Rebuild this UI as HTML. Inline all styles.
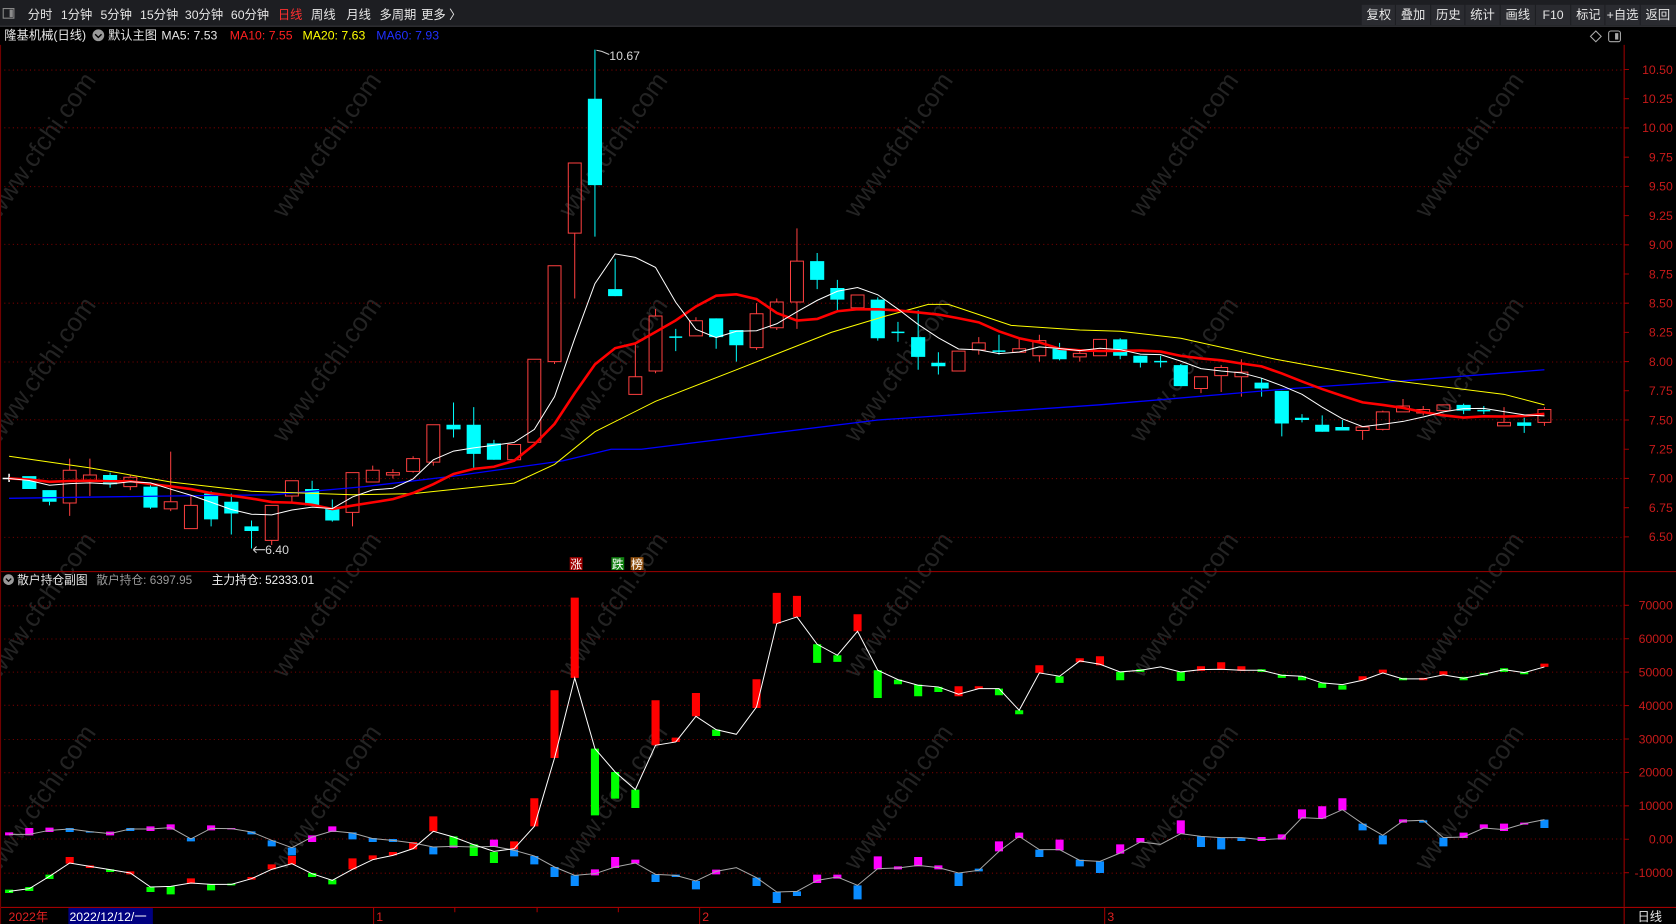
<!DOCTYPE html>
<html><head><meta charset="utf-8">
<style>
html,body{margin:0;padding:0;background:#000;overflow:hidden}
svg{display:block}
text{font-family:"Liberation Sans","Noto Sans CJK SC",sans-serif}
.n{vector-effect:non-scaling-stroke}
</style></head>
<body>
<svg width="1676" height="924" viewBox="0 0 1568 864" preserveAspectRatio="none" xmlns="http://www.w3.org/2000/svg">
<rect x="0" y="0" width="1568" height="864" fill="#000"/>
<g fill="#232323" font-size="24" text-anchor="middle">
<text x="45" y="140" transform="rotate(-55 45 140)">www.cfchi.com</text>
<text x="312" y="140" transform="rotate(-55 312 140)">www.cfchi.com</text>
<text x="580" y="140" transform="rotate(-55 580 140)">www.cfchi.com</text>
<text x="847" y="140" transform="rotate(-55 847 140)">www.cfchi.com</text>
<text x="1114" y="140" transform="rotate(-55 1114 140)">www.cfchi.com</text>
<text x="1381" y="140" transform="rotate(-55 1381 140)">www.cfchi.com</text>
<text x="45" y="350" transform="rotate(-55 45 350)">www.cfchi.com</text>
<text x="312" y="350" transform="rotate(-55 312 350)">www.cfchi.com</text>
<text x="580" y="350" transform="rotate(-55 580 350)">www.cfchi.com</text>
<text x="847" y="350" transform="rotate(-55 847 350)">www.cfchi.com</text>
<text x="1114" y="350" transform="rotate(-55 1114 350)">www.cfchi.com</text>
<text x="1381" y="350" transform="rotate(-55 1381 350)">www.cfchi.com</text>
<text x="45" y="570" transform="rotate(-55 45 570)">www.cfchi.com</text>
<text x="312" y="570" transform="rotate(-55 312 570)">www.cfchi.com</text>
<text x="580" y="570" transform="rotate(-55 580 570)">www.cfchi.com</text>
<text x="847" y="570" transform="rotate(-55 847 570)">www.cfchi.com</text>
<text x="1114" y="570" transform="rotate(-55 1114 570)">www.cfchi.com</text>
<text x="1381" y="570" transform="rotate(-55 1381 570)">www.cfchi.com</text>
<text x="45" y="750" transform="rotate(-55 45 750)">www.cfchi.com</text>
<text x="312" y="750" transform="rotate(-55 312 750)">www.cfchi.com</text>
<text x="580" y="750" transform="rotate(-55 580 750)">www.cfchi.com</text>
<text x="847" y="750" transform="rotate(-55 847 750)">www.cfchi.com</text>
<text x="1114" y="750" transform="rotate(-55 1114 750)">www.cfchi.com</text>
<text x="1381" y="750" transform="rotate(-55 1381 750)">www.cfchi.com</text>
</g>
<!-- grids -->
<g stroke="#7a0000" stroke-dasharray="1 3">
<line x1="0" y1="65.5" x2="1519" y2="65.5"/><line x1="0" y1="119.5" x2="1519" y2="119.5"/><line x1="0" y1="174.5" x2="1519" y2="174.5"/><line x1="0" y1="228.5" x2="1519" y2="228.5"/><line x1="0" y1="283.5" x2="1519" y2="283.5"/><line x1="0" y1="338.5" x2="1519" y2="338.5"/><line x1="0" y1="392.5" x2="1519" y2="392.5"/><line x1="0" y1="447.5" x2="1519" y2="447.5"/><line x1="0" y1="502.5" x2="1519" y2="502.5"/>
<line x1="0" y1="566.5" x2="1519" y2="566.5"/><line x1="0" y1="597.5" x2="1519" y2="597.5"/><line x1="0" y1="628.5" x2="1519" y2="628.5"/><line x1="0" y1="659.5" x2="1519" y2="659.5"/><line x1="0" y1="691.5" x2="1519" y2="691.5"/><line x1="0" y1="722.5" x2="1519" y2="722.5"/><line x1="0" y1="753.5" x2="1519" y2="753.5"/><line x1="0" y1="784.5" x2="1519" y2="784.5"/><line x1="0" y1="816.5" x2="1519" y2="816.5"/>
</g>
<!-- main chart in data coords: x=i, y=price -->
<g transform="matrix(18.9 0 0 -109.25 8.5 1212.125)" fill="none">
<path class="n" stroke="#00ffff" stroke-width="1" d="M2 6.8V6.77M5 7.05V6.92M7 6.95V6.74M10 6.89V6.59M11 6.87V6.52M12 6.64V6.4M15 6.98V6.77M16 6.82V6.63M22 7.65V7.35M23 7.61V7.09M24 7.33V7.16M29 10.67V9.07M30 8.88V8.56M35 8.37V8.11M36 8.27V8M40 8.93V8.62M41 8.7V8.44M43 8.55V8.18M45 8.44V7.93M46 8.08V7.89M52 8.16V8.01M55 8.2V8.02M56 8.05V7.95M58 7.98V7.79M62 7.86V7.7M63 7.75V7.36M64 7.55V7.48M65 7.54V7.4M66 7.5V7.41M72 7.64V7.55M75 7.52V7.39M33 8.28V8.09M44 8.34V8.17M49 8.23V8.06M57 8.05V7.95M73 7.62V7.55"/>
<path class="n" stroke="#00ffff" stroke-width="1.5" d="M32.68 8.21H33.32M43.68 8.25H44.32M48.68 8.09H49.32M56.68 8H57.32M72.68 7.58H73.32"/>
<path class="n" stroke="#fff" stroke-width="1.5" d="M-0.32 7H0.32M0 7.04V6.97"/>
<path fill="#00ffff" d="M.65 7.02h.7V6.91h-.7zM1.65 6.9h.7V6.8h-.7zM4.65 7.03h.7V6.95h-.7zM6.65 6.93h.7V6.75h-.7zM9.65 6.87h.7V6.65h-.7zM10.65 6.8h.7V6.7h-.7zM11.65 6.59h.7V6.55h-.7zM14.65 6.91h.7V6.77h-.7zM15.65 6.74h.7V6.64h-.7zM21.65 7.46h.7V7.42h-.7zM22.65 7.46h.7V7.21h-.7zM23.65 7.3h.7V7.16h-.7zM28.65 10.25h.7V9.51h-.7zM29.65 8.62h.7V8.56h-.7zM34.65 8.37h.7V8.21h-.7zM35.65 8.27h.7V8.14h-.7zM39.65 8.86h.7V8.7h-.7zM40.65 8.63h.7V8.53h-.7zM42.65 8.53h.7V8.2h-.7zM44.65 8.21h.7V8.04h-.7zM45.65 7.99h.7V7.96h-.7zM51.65 8.11h.7V8.02h-.7zM54.65 8.19h.7V8.05h-.7zM55.65 8.05h.7V7.99h-.7zM57.65 7.97h.7V7.79h-.7zM61.65 7.82h.7V7.77h-.7zM62.65 7.75h.7V7.47h-.7zM63.65 7.52h.7V7.5h-.7zM64.65 7.46h.7V7.4h-.7zM65.65 7.44h.7V7.41h-.7zM71.65 7.63h.7V7.58h-.7zM74.65 7.48h.7V7.45h-.7z"/>
<path class="n" stroke="#ff4040" stroke-width="1" d="M3 7.17V7.07M3 6.79V6.68M4 7.17V7.03M4 6.98V6.85M6 7.03V7.01M6 6.93V6.9M8 7.23V6.8M8 6.74V6.72M9 6.85V6.77M13 6.47V6.43M14 6.85V6.79M17 6.71V6.59M18 7.11V7.07M19 7.08V7.05M19 7.03V7M20 7.19V7.17M20 7.06V7.05M21 7.14V7.11M27 8V7.98M28 9.1V8.54M31 8.16V7.87M32 8.45V8.39M32 7.92V7.9M34 8.38V8.35M37 8.5V8.41M37 8.12V8.1M38 8.54V8.51M38 8.29V8.27M39 9.14V8.86M39 8.51V8.28M48 8.21V8.16M48 8.1V8.06M50 8.2V8.11M51 8.23V8.18M51 8.05V8M53 8.09V8.07M53 8.04V8M59 7.77V7.73M60 7.97V7.95M60 7.88V7.74M61 8.02V7.91M61 7.87V7.7M67 7.41V7.33M68 7.58V7.57M68 7.42V7.41M69 7.68V7.62M70 7.62V7.59M70 7.56V7.54M74 7.61V7.48M76 7.61V7.59M76 7.48V7.45"/>
<path class="n" stroke="#ff4040" stroke-width="1" d="M2.68 6.79h.64V7.07h-.64zM3.68 6.98h.64V7.03h-.64zM5.68 6.93h.64V7.01h-.64zM7.68 6.74h.64V6.8h-.64zM8.68 6.57h.64V6.77h-.64zM12.68 6.47h.64V6.77h-.64zM13.68 6.85h.64V6.98h-.64zM16.68 6.71h.64V7.05h-.64zM17.68 6.97h.64V7.07h-.64zM18.68 7.03h.64V7.05h-.64zM19.68 7.06h.64V7.17h-.64zM20.68 7.14h.64V7.46h-.64zM24.68 7.16h.64V7.29h-.64zM25.68 7.31h.64V8.02h-.64zM26.68 8h.64V8.82h-.64zM27.68 9.1h.64V9.7h-.64zM30.68 7.72h.64V7.87h-.64zM31.68 7.92h.64V8.39h-.64zM33.68 8.22h.64V8.35h-.64zM36.68 8.12h.64V8.41h-.64zM37.68 8.29h.64V8.51h-.64zM38.68 8.51h.64V8.86h-.64zM41.68 8.46h.64V8.57h-.64zM46.68 7.92h.64V8.09h-.64zM47.68 8.1h.64V8.16h-.64zM49.68 8.08h.64V8.11h-.64zM50.68 8.05h.64V8.18h-.64zM52.68 8.04h.64V8.07h-.64zM53.68 8.05h.64V8.19h-.64zM58.68 7.77h.64V7.87h-.64zM59.68 7.88h.64V7.95h-.64zM60.68 7.87h.64V7.91h-.64zM66.68 7.41h.64V7.44h-.64zM67.68 7.42h.64V7.57h-.64zM68.68 7.57h.64V7.62h-.64zM69.68 7.56h.64V7.59h-.64zM70.68 7.58h.64V7.63h-.64zM73.68 7.45h.64V7.48h-.64zM75.68 7.48h.64V7.59h-.64z"/>
<polyline class="n" stroke="#0000ff" stroke-width="1.3" points="0,6.83 8,6.85 13,6.86 17.6,6.93 22,7.02 27.4,7.15 29.8,7.25 31.3,7.25 43,7.5 54,7.63 63.5,7.77 68.6,7.83 76,7.93"/>
<polyline class="n" stroke="#ffff00" stroke-width="1" points="0,7.19 4,7.09 8,6.97 12,6.89 17,6.86 20,6.87 25,6.96 27,7.12 29,7.4 32,7.66 36,7.93 40.7,8.25 43.4,8.39 45.5,8.49 46.5,8.49 49.6,8.31 53,8.27 55,8.26 58,8.2 62.7,8.02 68.4,7.84 74,7.72 76,7.63"/>
<polyline class="n" stroke="#ff0000" stroke-width="2.6" points="0,7 1,6.991 2,6.971 3,6.978 4,6.981 5,6.976 6,6.977 7,6.952 8,6.932 9,6.909 10,6.874 11,6.853 12,6.828 13,6.798 14,6.793 15,6.775 16,6.738 17,6.768 18,6.795 19,6.823 20,6.875 21,6.951 22,7.038 23,7.082 24,7.1 25,7.152 26,7.29 27,7.467 28,7.73 29,7.976 30,8.115 31,8.156 32,8.253 33,8.353 34,8.472 35,8.564 36,8.576 37,8.535 38,8.416 39,8.351 40,8.365 41,8.431 42,8.449 43,8.448 44,8.438 45,8.421 46,8.403 47,8.371 48,8.336 49,8.259 50,8.2 51,8.165 52,8.11 53,8.097 54,8.091 55,8.092 56,8.095 57,8.086 58,8.049 59,8.027 60,8.011 61,7.984 62,7.959 63,7.899 64,7.83 65,7.765 66,7.707 67,7.651 68,7.629 69,7.604 70,7.568 71,7.54 72,7.521 73,7.532 74,7.53 75,7.535 76,7.553"/>
<polyline class="n" stroke="#ffffff" stroke-width="1" points="0,7 1,6.982 2,6.942 3,6.956 4,6.962 5,6.952 6,6.972 7,6.962 8,6.908 9,6.856 10,6.796 11,6.734 12,6.694 13,6.688 14,6.73 15,6.754 16,6.742 17,6.842 18,6.902 19,6.916 20,6.996 21,7.16 22,7.234 23,7.262 24,7.284 25,7.308 26,7.42 27,7.7 28,8.198 29,8.668 30,8.922 31,8.892 32,8.806 33,8.508 34,8.276 35,8.206 36,8.26 37,8.264 38,8.324 39,8.426 40,8.524 41,8.602 42,8.634 43,8.572 44,8.45 45,8.318 46,8.204 47,8.108 48,8.1 49,8.068 50,8.082 51,8.126 52,8.112 53,8.094 54,8.114 55,8.102 56,8.064 57,8.06 58,8.004 59,7.94 60,7.92 61,7.904 62,7.858 63,7.794 64,7.72 65,7.61 66,7.51 67,7.444 68,7.464 69,7.488 70,7.526 71,7.57 72,7.598 73,7.6 74,7.572 75,7.544 76,7.536"/>
</g>
<path d="M558 47 L563 48 L570 51" fill="none" stroke="#ccc"/>
<text x="570" y="56" fill="#d8d8d8" font-size="11.5">10.67</text>
<path d="M237 514 L248 514 M237 514 L240 511 M237 514 L240 517" fill="none" stroke="#ccc"/>
<text x="248" y="518" fill="#d8d8d8" font-size="11.5">6.40</text>
<!-- sub chart -->
<g transform="matrix(18.9 0 0 0.3118 8.5 533.2)">
<path fill="#00ff00" d="M-.2 958h.4V968h-.4zM.8 950h.4V962h-.4zM1.8 913h.4V926h-.4zM4.8 897h.4V905h-.4zM6.8 950h.4V965h-.4zM7.8 947h.4V972h-.4zM9.8 942h.4V960h-.4zM10.8 940h.4V945h-.4zM14.8 908h.4V920h-.4zM15.8 928h.4V942h-.4zM21.8 798h.4V828h-.4zM22.8 822h.4V857h-.4zM23.8 845h.4V878h-.4zM28.8 535h.4V735h-.4zM29.8 605h.4V685h-.4zM30.8 658h.4V713h-.4zM34.8 478h.4V497h-.4zM39.8 222h.4V278h-.4zM40.8 255h.4V275h-.4zM42.8 300h.4V383h-.4zM43.8 328h.4V342h-.4zM44.8 343h.4V378h-.4zM45.8 350h.4V365h-.4zM48.8 355h.4V375h-.4zM49.8 420h.4V432h-.4zM51.8 318h.4V338h-.4zM54.8 305h.4V330h-.4zM55.8 297h.4V305h-.4zM57.8 305h.4V332h-.4zM61.8 297h.4V305h-.4zM62.8 313h.4V323h-.4zM63.8 318h.4V330h-.4zM64.8 338h.4V353h-.4zM65.8 345h.4V358h-.4zM68.8 323h.4V330h-.4zM71.8 320h.4V330h-.4zM72.8 308h.4V315h-.4zM73.8 294h.4V305h-.4zM74.8 305h.4V312h-.4z"/>
<path fill="#ff0000" d="M2.8 860h.4V880h-.4zM3.8 885h.4V893h-.4zM5.8 903h.4V912h-.4zM8.8 924h.4V940h-.4zM11.8 920h.4V928h-.4zM12.8 882h.4V897h-.4zM13.8 857h.4V882h-.4zM16.8 864h.4V897h-.4zM17.8 855h.4V868h-.4zM18.8 845h.4V855h-.4zM19.8 815h.4V837h-.4zM20.8 738h.4V783h-.4zM24.8 813h.4V837h-.4zM25.8 684h.4V768h-.4zM26.8 360h.4V563h-.4zM27.8 82h.4V323h-.4zM31.8 390h.4V525h-.4zM32.8 502h.4V515h-.4zM33.8 368h.4V438h-.4zM36.8 327h.4V413h-.4zM37.8 68h.4V160h-.4zM38.8 77h.4V140h-.4zM41.8 132h.4V183h-.4zM46.8 348h.4V378h-.4zM47.8 348h.4V356h-.4zM50.8 285h.4V308h-.4zM52.8 264h.4V276h-.4zM53.8 258h.4V285h-.4zM58.8 288h.4V302h-.4zM59.8 276h.4V297h-.4zM60.8 288h.4V302h-.4zM66.8 318h.4V330h-.4zM67.8 298h.4V308h-.4zM69.8 323h.4V330h-.4zM70.8 303h.4V314h-.4zM75.8 280h.4V290h-.4z"/>
<path fill="#ff00ff" d="M-.2 786h.4V795h-.4zM.8 773h.4V795h-.4zM1.8 772h.4V785h-.4zM4.8 784h.4V795h-.4zM6.8 768h.4V782h-.4zM7.8 762h.4V778h-.4zM9.8 765h.4V780h-.4zM10.8 773h.4V777h-.4zM14.8 795h.4V815h-.4zM15.8 768h.4V785h-.4zM21.8 826h.4V832h-.4zM23.8 808h.4V830h-.4zM28.8 897h.4V915h-.4zM29.8 860h.4V893h-.4zM30.8 868h.4V880h-.4zM34.8 898h.4V912h-.4zM39.8 913h.4V938h-.4zM40.8 913h.4V925h-.4zM42.8 858h.4V897h-.4zM43.8 888h.4V897h-.4zM44.8 860h.4V888h-.4zM45.8 885h.4V897h-.4zM48.8 813h.4V843h-.4zM49.8 787h.4V803h-.4zM51.8 808h.4V840h-.4zM54.8 822h.4V850h-.4zM55.8 803h.4V817h-.4zM57.8 750h.4V790h-.4zM61.8 800h.4V812h-.4zM62.8 792h.4V808h-.4zM63.8 717h.4V745h-.4zM64.8 708h.4V745h-.4zM65.8 684h.4V720h-.4zM68.8 747h.4V757h-.4zM71.8 787h.4V803h-.4zM72.8 762h.4V775h-.4zM73.8 760h.4V782h-.4zM74.8 757h.4V763h-.4z"/>
<path fill="#0a8cff" d="M2.8 773h.4V785h-.4zM3.8 783h.4V787h-.4zM5.8 773h.4V782h-.4zM8.8 803h.4V813h-.4zM11.8 783h.4V792h-.4zM12.8 810h.4V828h-.4zM13.8 832h.4V855h-.4zM16.8 786h.4V807h-.4zM17.8 803h.4V815h-.4zM18.8 806h.4V815h-.4zM20.8 830h.4V852h-.4zM24.8 838h.4V858h-.4zM25.8 857h.4V882h-.4zM26.8 890h.4V920h-.4zM27.8 915h.4V947h-.4zM31.8 912h.4V935h-.4zM32.8 913h.4V920h-.4zM33.8 932h.4V957h-.4zM36.8 922h.4V947h-.4zM37.8 965h.4V998h-.4zM38.8 963h.4V977h-.4zM41.8 945h.4V987h-.4zM46.8 908h.4V947h-.4zM47.8 895h.4V903h-.4zM50.8 838h.4V860h-.4zM52.8 868h.4V888h-.4zM53.8 873h.4V908h-.4zM58.8 798h.4V830h-.4zM59.8 802h.4V837h-.4zM60.8 802h.4V812h-.4zM66.8 760h.4V780h-.4zM67.8 795h.4V822h-.4zM69.8 750h.4V757h-.4zM70.8 802h.4V828h-.4zM75.8 748h.4V773h-.4z"/>
<polyline class="n" fill="none" stroke="#a8a8a8" stroke-width="1" points="0,792 1,792 2,780 3,776 4,784 5,790 6,776 7,776 8,772 9,806 10,774 11,775 12,785 13,810 14,832 15,800 16,782 17,788 18,805 19,810 20,818 21,830 22,828 23,830 24,828 25,840 26,857 27,890 28,915 29,910 30,890 31,878 32,912 33,915 34,932 35,903 36,892 37,922 38,965 39,963 40,930 41,920 42,945 43,895 44,893 45,885 46,892 47,908 48,900 49,843 50,798 51,838 52,838 53,870 54,873 55,848 56,815 57,822 58,790 59,798 60,802 61,802 62,808 63,805 64,742 65,745 66,718 67,760 68,795 69,752 70,750 71,802 72,800 73,773 74,778 75,760 76,748"/>
<polyline class="n" fill="none" stroke="#ffffff" stroke-width="1" points="0,963 1,955 2,918 3,878 4,888 5,898 6,908 7,950 8,948 9,938 10,942 11,942 12,925 13,897 14,880 15,910 16,930 17,897 18,868 19,855 20,835 21,783 22,800 23,823 24,843 25,835 26,768 27,563 28,323 29,535 30,605 31,658 32,525 33,515 34,438 35,478 36,492 37,410 38,160 39,140 40,222 41,255 42,183 43,300 44,328 45,345 46,350 47,372 48,355 49,355 50,420 51,308 52,318 53,272 54,282 55,305 56,300 57,290 58,305 59,298 60,297 61,300 62,300 63,315 64,318 65,338 66,343 67,330 68,308 69,326 70,326 71,314 72,324 73,312 74,298 75,307 76,290"/>
</g>
<!-- top bar -->
<rect x="0" y="0" width="1568" height="24" fill="#1d1e22"/>
<line x1="0" y1="24.5" x2="1568" y2="24.5" stroke="#3a3b40"/>
<rect x="3" y="8" width="10" height="9" fill="none" stroke="#8a8a8a"/>
<rect x="9" y="9" width="3" height="7" fill="#8a8a8a"/>
<g font-size="11.5" fill="#e6e6e6">
<text x="26" y="18">分时</text><text x="57" y="18">1分钟</text><text x="94" y="18">5分钟</text>
<text x="131" y="18">15分钟</text><text x="173" y="18">30分钟</text><text x="216" y="18">60分钟</text>
<text x="260" y="18" fill="#ff3030">日线</text><text x="291" y="18">周线</text><text x="324" y="18">月线</text>
<text x="355" y="18">多周期</text><text x="394" y="18">更多 〉</text>
</g>
<g font-size="11.5" fill="#e6e6e6" text-anchor="middle">
<rect x="1274" y="4.5" width="31" height="19" fill="#2a2b30"/><text x="1290" y="18">复权</text>
<rect x="1306" y="4.5" width="32" height="19" fill="#2a2b30"/><text x="1322" y="18">叠加</text>
<rect x="1339" y="4.5" width="31" height="19" fill="#2a2b30"/><text x="1355" y="18">历史</text>
<rect x="1371" y="4.5" width="32" height="19" fill="#2a2b30"/><text x="1387" y="18">统计</text>
<rect x="1404" y="4.5" width="32" height="19" fill="#2a2b30"/><text x="1420" y="18">画线</text>
<rect x="1437" y="4.5" width="32" height="19" fill="#2a2b30"/><text x="1453" y="18">F10</text>
<rect x="1470" y="4.5" width="31" height="19" fill="#2a2b30"/><text x="1486" y="18">标记</text>
<rect x="1502" y="4.5" width="32" height="19" fill="#2a2b30"/><text x="1518" y="18">+自选</text>
<rect x="1535" y="4.5" width="33" height="19" fill="#2a2b30"/><text x="1551" y="18">返回</text>
</g>
<!-- info row -->
<g font-size="11.5">
<text x="4" y="37" fill="#e6e6e6">隆基机械(日线)</text>
<circle cx="92" cy="33" r="5.5" fill="#9a9a9a"/><path d="M89 32 L92 35 L95 32" stroke="#000" stroke-width="1.3" fill="none"/>
<text x="101" y="37" fill="#e6e6e6">默认主图</text>
<text x="151" y="37" fill="#e6e6e6">MA5: 7.53</text>
<text x="215" y="37" fill="#ff2020">MA10: 7.55</text>
<text x="283" y="37" fill="#ffff00">MA20: 7.63</text>
<text x="352" y="37" fill="#2030ff">MA60: 7.93</text>
</g>
<path d="M1493 29 L1498 34 L1493 39 L1488 34 Z" fill="none" stroke="#aaa"/>
<rect x="1505" y="29" width="11" height="10" rx="2" fill="none" stroke="#aaa"/><rect x="1511" y="31" width="3" height="6" fill="#aaa"/>
<!-- axes -->
<line x1="1519.5" y1="42" x2="1519.5" y2="848" stroke="#9a0000"/>
<line x1="0" y1="534.5" x2="1568" y2="534.5" stroke="#a00000"/>
<line x1="0" y1="848.5" x2="1568" y2="848.5" stroke="#a00000"/>
<line x1="0.5" y1="42" x2="0.5" y2="864" stroke="#700000"/>
<g stroke="#9a0000">
<path d="M1519 65h5M1519 92.3h5M1519 119.6h5M1519 147h5M1519 174.25h5M1519 201.6h5M1519 228.9h5M1519 256.2h5M1519 283.5h5M1519 310.8h5M1519 338.1h5M1519 365.4h5M1519 392.75h5M1519 420.1h5M1519 447.4h5M1519 474.7h5M1519 502h5M1519 566h5M1519 597.25h5M1519 628.5h5M1519 659.75h5M1519 691h5M1519 722.25h5M1519 753.5h5M1519 784.75h5M1519 816h5"/>
</g>
<g font-size="11.5" fill="#c81a1a" text-anchor="end">
<text x="1565" y="69">10.50</text><text x="1565" y="96.3">10.25</text><text x="1565" y="123.6">10.00</text><text x="1565" y="151">9.75</text><text x="1565" y="178.25">9.50</text><text x="1565" y="205.6">9.25</text><text x="1565" y="232.9">9.00</text><text x="1565" y="260.2">8.75</text><text x="1565" y="287.5">8.50</text><text x="1565" y="314.8">8.25</text><text x="1565" y="342.1">8.00</text><text x="1565" y="369.4">7.75</text><text x="1565" y="396.75">7.50</text><text x="1565" y="424.1">7.25</text><text x="1565" y="451.4">7.00</text><text x="1565" y="478.7">6.75</text><text x="1565" y="506">6.50</text>
<text x="1565" y="570">70000</text><text x="1565" y="601.25">60000</text><text x="1565" y="632.5">50000</text><text x="1565" y="663.75">40000</text><text x="1565" y="695">30000</text><text x="1565" y="726.25">20000</text><text x="1565" y="757.5">10000</text><text x="1565" y="788.75">0.00</text><text x="1565" y="820">-10000</text>
</g>
<!-- sub info -->
<g font-size="11">
<circle cx="8" cy="542" r="5" fill="#9a9a9a"/><path d="M5.5 541 L8 543.5 L10.5 541" stroke="#000" stroke-width="1.2" fill="none"/>
<text x="16" y="546" fill="#e6e6e6">散户持仓副图</text>
<text x="90" y="546" fill="#9a9a9a">散户持仓: 6397.95</text>
<text x="198" y="546" fill="#f0f0f0">主力持仓: 52333.01</text>
</g>
<rect x="533" y="521" width="12" height="12" fill="#a00000"/><text x="533.5" y="531.5" font-size="11" fill="#fff">涨</text>
<rect x="572" y="521" width="12" height="12" fill="#108010"/><text x="572.5" y="531.5" font-size="11" fill="#fff">跌</text>
<rect x="590" y="521" width="12" height="12" fill="#905010"/><text x="590.5" y="531.5" font-size="11" fill="#fff">榜</text>
<!-- bottom axis -->
<g font-size="11.5">
<text x="8" y="861" fill="#e02020">2022年</text>
<rect x="64" y="849" width="79" height="15" fill="#000080"/>
<text x="65" y="861" fill="#fff">2022/12/12/一</text>
<line x1="349.5" y1="849" x2="349.5" y2="864" stroke="#a00000"/><text x="352" y="861" fill="#e02020">1</text>
<line x1="425.5" y1="849" x2="425.5" y2="853" stroke="#a00000"/>
<line x1="502.5" y1="849" x2="502.5" y2="853" stroke="#a00000"/>
<line x1="578.5" y1="849" x2="578.5" y2="853" stroke="#a00000"/>
<line x1="654.5" y1="849" x2="654.5" y2="864" stroke="#a00000"/><text x="657" y="861" fill="#e02020">2</text>
<line x1="1033.5" y1="849" x2="1033.5" y2="864" stroke="#a00000"/><text x="1036" y="861" fill="#e02020">3</text>
<line x1="1519.5" y1="849" x2="1519.5" y2="864" stroke="#a00000"/>
<text x="1532" y="861" fill="#e6e6e6">日线</text>
</g>
</svg>
</body></html>
